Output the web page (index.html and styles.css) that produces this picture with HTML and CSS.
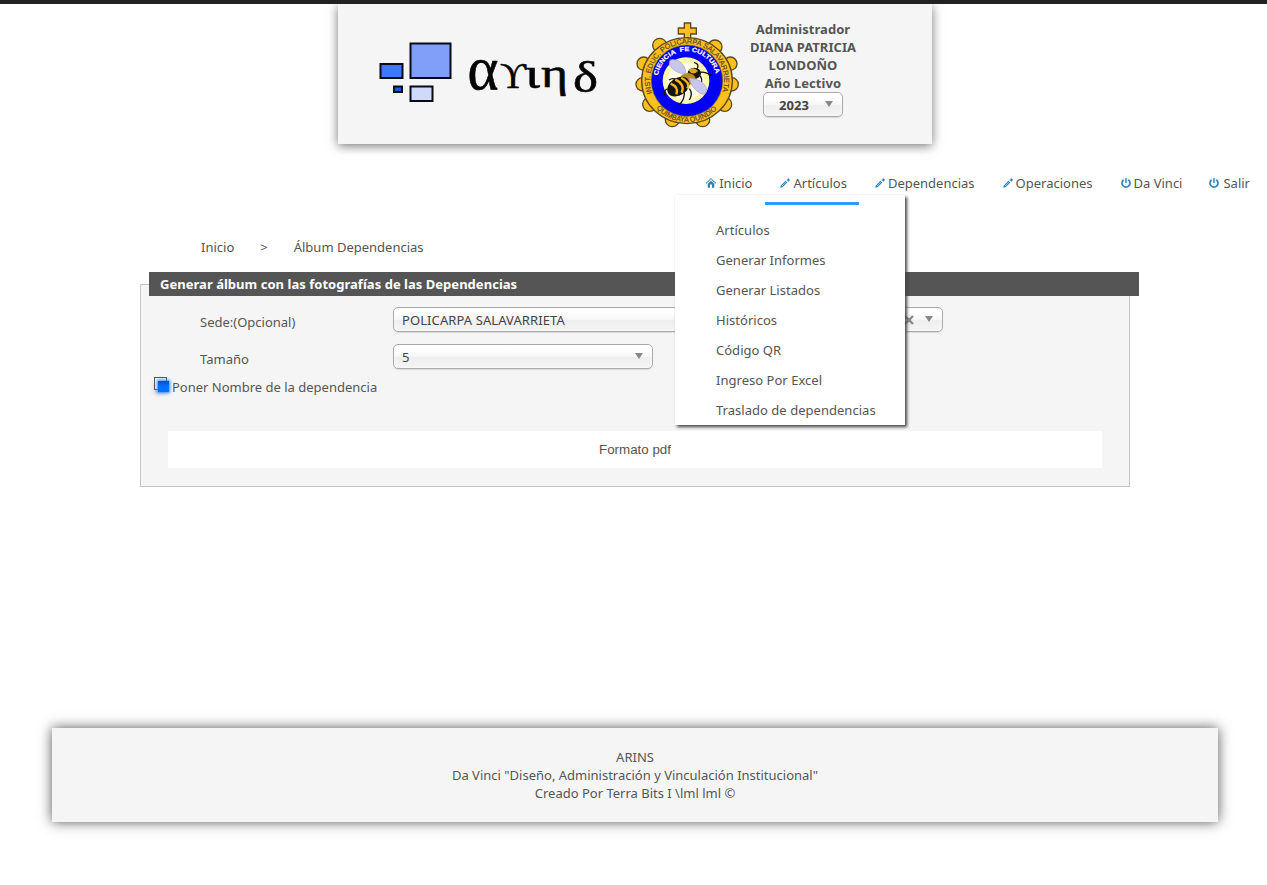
FILE: index.html
```html
<!DOCTYPE html>
<html lang="es">
<head>
<meta charset="utf-8">
<title>ARINS - Álbum Dependencias</title>
<link rel="stylesheet" href="styles.css">
</head>
<body>
<svg class="defs" width="0" height="0" aria-hidden="true">
  <symbol id="pencil" viewBox="0 0 10 10"><path d="M.3 9.700 .8 7.400 5.500 2.700 7.300 4.500 2.600 9.200Z" fill="#3186be"/><path d="M2.200 7.800 6.200 3.800" stroke="#e3f1f9" stroke-width=".8" stroke-dasharray="1.200 .5"/><path d="M8.300 .4V3.600M6.700 2H9.900" stroke="#217bb8" stroke-width="1.200"/></symbol>
  <symbol id="power" viewBox="0 0 10 10"><path d="M2.700 1.800A4 4 0 1 0 7.300 1.800" fill="none" stroke="#3186be" stroke-width="1.700"/><path d="M5 0V5" stroke="#3186be" stroke-width="1.500"/></symbol>
  <symbol id="home" viewBox="0 0 10 10"><path d="M.3 5.200 5 .8 9.700 5.200" fill="none" stroke="#2e83bb" stroke-width="1.200" stroke-dasharray="1.500 .4"/><path d="M1.700 5.700 5 2.800 8.300 5.700V9.700H6V6.500H4V9.700H1.700Z" fill="#2e83bb"/></symbol>
</svg>
<div class="topbar"></div>
<header class="header">
  <svg class="logo" viewBox="0 0 240 80" role="img" aria-label="arins">
    <g stroke="#070b14" stroke-width="2">
      <rect x="40.500" y="13.500" width="40" height="34.500" fill="#809ff8"/>
      <rect x="10.500" y="34" width="22" height="14" fill="#4077ff"/>
      <rect x="24" y="56.500" width="8" height="5.500" fill="#1259e8"/>
      <rect x="40.500" y="56.500" width="22" height="14.500" fill="#cfdafb"/>
    </g>
    <g class="logo-text">
      <text x="97.500" y="59" font-size="62" textLength="31" lengthAdjust="spacingAndGlyphs">α</text>
      <text x="130" y="57.500" font-size="35" textLength="26" lengthAdjust="spacingAndGlyphs">ϒ</text>
      <text x="155" y="58" font-size="44" textLength="15" lengthAdjust="spacingAndGlyphs">ι</text>
      <text x="171" y="56.500" font-size="43" textLength="27" lengthAdjust="spacingAndGlyphs">η</text>
      <text x="203" y="62" font-size="44" textLength="25" lengthAdjust="spacingAndGlyphs">δ</text>
    </g>
  </svg>
  <svg class="crest" viewBox="0 0 375 375" role="img" aria-label="Policarpa Salavarrieta">
    <defs>
      <path id="ring-top" d="M81.700 250A111 111 0 1 1 290.300 250"/>
      <path id="ring-bottom" d="M94 295A124 124 0 0 0 278 295"/>
      <path id="ring-inner" d="M98.400 197A89 89 0 0 1 273.600 197"/>
    </defs>
    <g fill="#fdc01e" stroke="#59491d" stroke-width="4">
      <path d="M178 39H197V54H214V72H197V92H178V72H160V54H178Z"/>
      <circle cx="104" cy="106" r="21"/><circle cx="270" cy="111" r="21"/><circle cx="56" cy="161" r="20"/><circle cx="316" cy="161" r="20"/><circle cx="53" cy="223" r="20"/><circle cx="320" cy="223" r="20"/><circle cx="74" cy="283" r="21"/><circle cx="299" cy="283" r="21"/><circle cx="142" cy="329" r="21"/><circle cx="233" cy="329" r="21"/>
      <ellipse cx="186" cy="212" rx="136" ry="129"/>
    </g>
    <circle cx="186" cy="212" r="107" fill="#0300f8" stroke="#75671c" stroke-width="2"/>
    <circle cx="183" cy="212" r="70" fill="#fbf6ae"/>
    <circle cx="182" cy="214" r="55" fill="#fffee9"/>
    <g class="crest-text">
      <text font-size="22" fill="#5a4932"><textPath href="#ring-top" textLength="420" lengthAdjust="spacingAndGlyphs">INST. EDUC. POLICARPA SALAVARRIETA</textPath></text>
      <text font-size="22" fill="#5a4932"><textPath href="#ring-bottom" textLength="204" lengthAdjust="spacingAndGlyphs">QUIMBAYA QUINDIO</textPath></text>
      <text class="motto" font-size="19" fill="#fff"><textPath href="#ring-inner" textLength="242" lengthAdjust="spacingAndGlyphs">CIENCIA&#160; FE CULTURA</textPath></text>
    </g>
    <g fill="none" stroke="#171410" stroke-width="4">
      <path d="M215 180Q226 162 207 157M223 188Q236 183 258 196M226 197Q232 209 230 218M178 243Q180 270 162 284M193 236Q205 250 193 270M137 236Q115 234 118 258M156 209Q143 202 132 210"/>
    </g>
    <ellipse cx="208" cy="190" rx="20" ry="17" fill="#181510"/>
    <path d="M190 181Q205 167 219 183Q204 199 190 181" fill="#dba822"/>
    <ellipse cx="188" cy="207" rx="24" ry="18" fill="#bc8a1b"/>
    <ellipse cx="160" cy="230" rx="36" ry="26" transform="rotate(-34 160 230)" fill="#17140f"/>
    <g fill="none" stroke="#f4b51d" stroke-width="7"><path d="M169 203Q197 218 187 235"/><path d="M151 209Q181 223 170 248"/><path d="M137 221Q162 231 154 253"/></g>
    <g fill="#c8c6ed" stroke="#9e9bce" stroke-width="2"><path d="M184 192Q178 153 149 149Q130 145 133 164Q149 191 184 192Z"/><path d="M193 204Q198 234 227 251Q248 257 244 234Q234 208 193 204Z"/></g>
  </svg>
  <div class="account">
    <div>Administrador</div>
    <div>DIANA PATRICIA LONDOÑO</div>
    <div>Año Lectivo</div>
    <div class="select year"><span>2023</span><i class="arrow"></i></div>
  </div>
</header>

<nav class="nav">
  <a class="nav-item"><svg><use href="#home"/></svg>Inicio</a>
  <div class="nav-item active"><svg><use href="#pencil"/></svg>Artículos
    <div class="dropdown">
      <a>Artículos</a><a>Generar Informes</a><a>Generar Listados</a><a>Históricos</a><a>Código QR</a><a>Ingreso Por Excel</a><a>Traslado de dependencias</a>
    </div>
  </div>
  <a class="nav-item"><svg><use href="#pencil"/></svg>Dependencias</a>
  <a class="nav-item"><svg><use href="#pencil"/></svg>Operaciones</a>
  <a class="nav-item"><svg><use href="#power"/></svg>Da Vinci</a>
  <a class="nav-item last"><svg><use href="#power"/></svg>Salir</a>
</nav>

<main class="main">
  <div class="breadcrumb"><span>Inicio</span><span>&gt;</span><span>Álbum Dependencias</span></div>
  <section class="panel">
    <h1 class="legend">Generar álbum con las fotografías de las Dependencias</h1>
    <div class="row"><label>Sede:(Opcional)</label><div class="select wide"><span>POLICARPA SALAVARRIETA</span><svg class="clear" viewBox="0 0 10 10"><path d="M1 1 9 9M9 1 1 9" stroke="#888" stroke-width="2.400"/></svg><i class="arrow"></i></div></div>
    <div class="row"><label>Tamaño</label><div class="select size"><span>5</span><i class="arrow"></i></div></div>
    <div class="check-row"><span class="check"></span><label>Poner Nombre de la dependencia</label></div>
    <button class="submit">Formato pdf</button>
  </section>
</main>

<footer class="footer">
  <div>ARINS</div>
  <div>Da Vinci "Diseño, Administración y Vinculación Institucional"</div>
  <div>Creado Por Terra Bits I \lml lml ©</div>
</footer>
</body>
</html>
```
FILE: styles.css
```css
* { box-sizing: border-box; }
body {
  margin: 0;
  min-height: 100vh;
  background: #fff;
  color: #555;
  font: 13px/18px "Noto Sans", sans-serif;
}
.defs { display: block; }
.topbar { height: 4px; background: #222; }
.header {
  display: flex;
  width: 594px;
  height: 140px;
  margin-left: 338px;
  padding: 6px 0 0 32px;
  background: #f5f5f5;
  box-shadow: 0 2px 10px #777;
  clip-path: inset(0 -20px -20px -20px);
}
.logo { width: 240px; height: 80px; margin-top: 20px; }
.logo-text {
  font-family: "Liberation Serif", serif;
  fill: #050505;
  stroke: #050505;
  stroke-width: .6px;
}
.crest { width: 125px; height: 125px; margin-left: 14.5px; }
.crest-text { font-family: "Liberation Sans", sans-serif; stroke: #5a4932; stroke-width: .6px; }
.motto { font-weight: bold; stroke: #fff; }
.account {
  width: 120px;
  margin-left: -6.5px;
  padding-top: 10px;
  font-weight: bold;
  letter-spacing: .05px;
  text-align: center;
}
.select {
  display: flex;
  align-items: center;
  height: 25px;
  padding: 0 9px 0 8px;
  border: 1px solid #aaa;
  border-radius: 5px;
  background: linear-gradient(#fff 20%, #f6f6f6 50%, #eee 52%, #f4f4f4 100%);
  box-shadow: inset 0 0 3px #fff, 0 1px 1px rgba(0, 0, 0, .1);
  color: #444;
  letter-spacing: .09px;
}
.select span { flex: 1; }
.arrow {
  margin-bottom: 1px;
  border: 4px solid transparent;
  border-top: 6px solid #888;
  border-bottom: 0;
}
.year { width: 80px; margin: 0 auto; padding-left: 0; }
.year span { padding-right: 1px; }
.nav {
  display: flex;
  justify-content: flex-end;
  height: 40px;
  margin-top: 21px;
  padding-right: 3px;
}
.nav-item {
  display: flex;
  gap: 3px;
  position: relative;
  height: 40px;
  padding: 9px 14px 0;
}
.nav-item svg { width: 10px; height: 10px; margin-top: 4px; }
.last { gap: 4px; padding-left: 13px; }
.active::after {
  content: "";
  position: absolute;
  z-index: 3;
  left: -1px;
  right: 2px;
  bottom: 0;
  height: 3px;
  background: #39f;
}
.dropdown {
  position: absolute;
  z-index: 2;
  top: 30px;
  left: -91.5px;
  width: 230px;
  padding: 20px 0 0 41px;
  background: #fff;
  box-shadow: 2px 2px 3px #444;
}
.dropdown a { display: block; line-height: 30px; letter-spacing: .03px; }
.main { width: 990px; margin-left: 140px; }
.breadcrumb { display: flex; gap: 26px; padding: 33px 0 28px 61px; }
.panel {
  height: 203px;
  border: 1px solid #c5c5c5;
  background: #f5f5f5;
}
.legend {
  width: 990px;
  height: 24px;
  margin: -13px 0 0 8px;
  padding: 0 11px;
  background: #555;
  color: #fff;
  font: bold 13px/24px "Noto Sans", sans-serif;
  letter-spacing: .03px;
}
.row { display: flex; height: 37px; padding: 11px 0 0 59px; }
.row label { width: 193px; padding-top: 6px; }
.wide { width: 550px; }
.size { width: 260px; }
.clear { width: 10px; height: 10px; margin-right: 11px; }
.check-row { display: flex; height: 18px; margin-top: 8px; padding-left: 13px; }
.check {
  position: relative;
  width: 13px;
  height: 13px;
  margin: -1px 5px 0 0;
  border: 1px solid #555;
  box-shadow: 0 4px 5px rgba(0, 0, 0, .15);
}
.check::after {
  content: "";
  position: absolute;
  left: 3px;
  top: 3px;
  width: 11px;
  height: 11px;
  background: linear-gradient(#0052bd, #0070ff 50%);
  box-shadow: 0 0 3px 1px #2688ff;
}
.submit {
  display: block;
  width: 934px;
  height: 37px;
  margin: 35px 0 0 27px;
  padding: 0;
  border: 0;
  background: #fff;
  color: #555;
  font: 13.333px "Liberation Sans", sans-serif;
}
.footer {
  width: 1166px;
  height: 94px;
  margin: 241px 0 0 52px;
  padding-top: 20px;
  background: #f5f5f5;
  box-shadow: 0 0 12px #555;
  text-align: center;
}
```
